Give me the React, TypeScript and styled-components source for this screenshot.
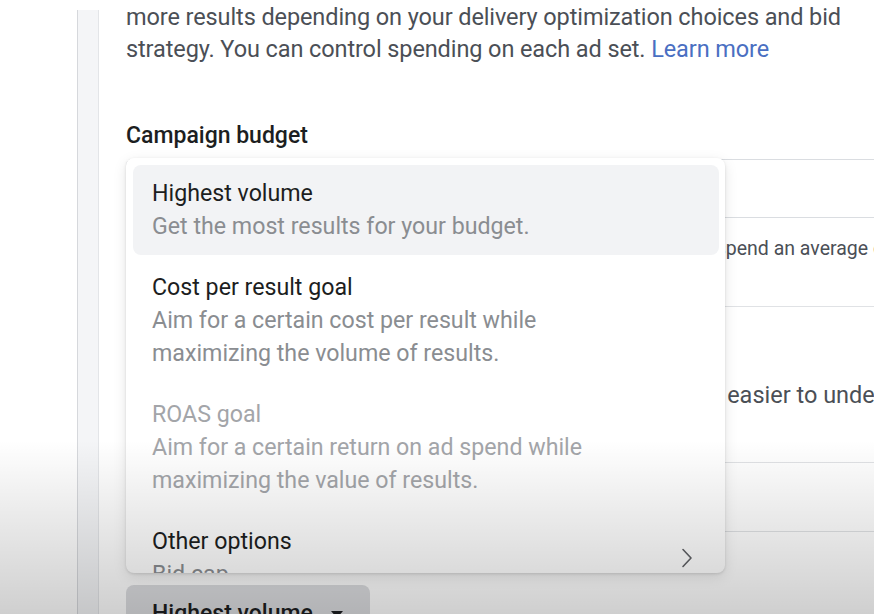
import React from 'react';
import styled, { createGlobalStyle } from 'styled-components';

const GlobalStyle = createGlobalStyle`
  html, body {
    margin: 0;
    padding: 0;
    background: #ffffff;
  }
  body {
    font-family: Roboto, "Liberation Sans", Arial, sans-serif;
    -webkit-font-smoothing: antialiased;
  }
`;

const Page = styled.div`
  position: relative;
  width: 874px;
  height: 614px;
  overflow: hidden;
  display: flex;
  background: #ffffff;
`;

const Gutter = styled.div`
  width: 77px;
  flex-shrink: 0;
`;

const Rail = styled.div`
  width: 20px;
  flex-shrink: 0;
  margin-top: 10px;
  background: #f4f5f7;
  border-left: 1px solid #d6d8dc;
  border-right: 1px solid #e3e5e8;
`;

const Card = styled.div`
  position: relative;
  flex: 1;
  min-width: 0;
  padding-left: 27px;
  display: flex;
  flex-direction: column;

  & > * {
    flex-shrink: 0;
  }
`;

const Intro = styled.p`
  margin: 1px 0 0;
  font-size: 23.5px;
  line-height: 32px;
  color: #4b4f56;
  letter-spacing: -0.1px;
  white-space: nowrap;
`;

const Link = styled.a`
  color: #4a6fc2;
  text-decoration: none;
`;

const Heading = styled.h2`
  margin: 56px 0 0;
  font-size: 23px;
  line-height: 30px;
  font-weight: 500;
  color: #1c1e21;
`;

const BudgetField = styled.div`
  margin-top: 8px;
  height: 57px;
  width: calc(100% + 40px);
  border: 1px solid #dadde1;
  border-radius: 6px;
`;

const Section = styled.div<{ $height: number; $pad: number }>`
  height: ${(p) => p.$height}px;
  box-sizing: border-box;
  padding-top: ${(p) => p.$pad}px;
  border-bottom: 1px solid #e0e2e5;
  margin-right: -40px;
`;

const Note = styled.p<{ $indent: number; $size: number }>`
  margin: 0;
  padding-left: ${(p) => p.$indent}px;
  font-size: ${(p) => p.$size}px;
  line-height: 30px;
  color: #4b4f56;
  white-space: nowrap;
`;

const StrategyButton = styled.div`
  margin-top: 53px;
  width: 244px;
  height: 44px;
  border-radius: 8px 8px 0 0;
  background: #dcdde0;
  display: flex;
  align-items: flex-start;
  padding: 14px 0 0 26px;
  box-sizing: border-box;
  gap: 18px;
  font-size: 23px;
  line-height: 30px;
  font-weight: 500;
  color: #1c1e21;
`;

const Caret = styled.span`
  margin-top: 12px;
  width: 0;
  height: 0;
  border-left: 6px solid transparent;
  border-right: 6px solid transparent;
  border-top: 7px solid #1c1e21;
`;

const Menu = styled.div`
  position: absolute;
  left: 27px;
  top: 158px;
  width: 599px;
  height: 415px;
  box-sizing: border-box;
  padding: 7px 6px 0 7px;
  background: #ffffff;
  border-radius: 8px;
  box-shadow: 0 1px 3px rgba(0, 0, 0, 0.12), 0 4px 14px rgba(0, 0, 0, 0.1);
  overflow: hidden;
  display: flex;
  flex-direction: column;
  gap: 4px;
`;

const Option = styled.div<{ $active?: boolean }>`
  position: relative;
  flex-shrink: 0;
  padding: 12px 19px;
  border-radius: 8px;
  background: ${(p) => (p.$active ? '#f2f3f5' : 'transparent')};
  font-size: 23.2px;
  line-height: 33px;
`;

const Title = styled.div<{ $disabled?: boolean }>`
  color: ${(p) => (p.$disabled ? '#a3a5a9' : '#1c1e21')};
`;

const Desc = styled.div<{ $disabled?: boolean }>`
  color: ${(p) => (p.$disabled ? '#a3a5a9' : '#8a8d91')};
`;

const Chevron = styled.svg`
  position: absolute;
  right: 25px;
  top: 50%;
  transform: translateY(-50%);
`;

const Shade = styled.div`
  position: absolute;
  left: 0;
  right: 0;
  top: 440px;
  bottom: 0;
  pointer-events: none;
  background: linear-gradient(to bottom, rgba(0, 0, 0, 0) 0%, rgba(0, 0, 0, 0.19) 100%);
`;

const options = [
  {
    title: 'Highest volume',
    desc: ['Get the most results for your budget.'],
    active: true,
  },
  {
    title: 'Cost per result goal',
    desc: ['Aim for a certain cost per result while', 'maximizing the volume of results.'],
  },
  {
    title: 'ROAS goal',
    desc: ['Aim for a certain return on ad spend while', 'maximizing the value of results.'],
    disabled: true,
  },
  {
    title: 'Other options',
    desc: ['Bid cap'],
    more: true,
  },
];

export default function App() {
  return (
    <>
      <GlobalStyle />
      <Page>
        <Gutter />
        <Rail />
        <Card>
          <Intro>
            more results depending on your delivery optimization choices and bid
            <br />
            strategy. You can control spending on each ad set. <Link href="#">Learn more</Link>
          </Intro>
          <Heading>Campaign budget</Heading>
          <BudgetField />
          <Section $height={89} $pad={16}>
            <Note $indent={539} $size={19.5}>
              You'll spend an average of $20.00 a day.
            </Note>
          </Section>
          <Section $height={156} $pad={73}>
            <Note $indent={432} $size={23.5}>
              Results that are easier to understand.
            </Note>
          </Section>
          <Section $height={69} $pad={0} />
          <StrategyButton>
            Highest volume
            <Caret />
          </StrategyButton>

          <Menu>
            {options.map((o) => (
              <Option key={o.title} $active={o.active}>
                <Title $disabled={o.disabled}>{o.title}</Title>
                {o.desc.map((d) => (
                  <Desc key={d} $disabled={o.disabled}>
                    {d}
                  </Desc>
                ))}
                {o.more && (
                  <Chevron width="14" height="22" viewBox="0 0 14 22" fill="none">
                    <path d="M3 2.5l8 8.5-8 8.5" stroke="#606266" strokeWidth="1.6" strokeLinecap="round" strokeLinejoin="round" />
                  </Chevron>
                )}
              </Option>
            ))}
          </Menu>
        </Card>
        <Shade />
      </Page>
    </>
  );
}
